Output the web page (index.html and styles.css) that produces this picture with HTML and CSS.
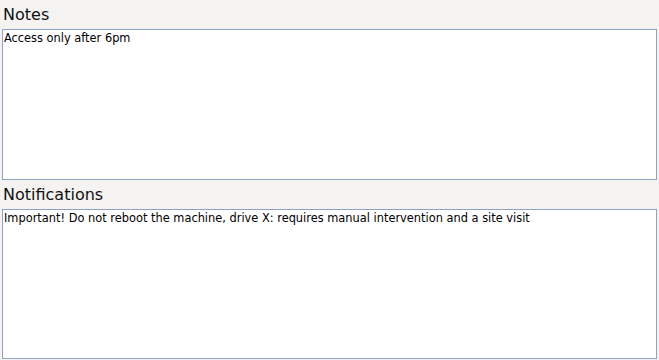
FILE: index.html
```html
<!DOCTYPE html>
<html lang="en">
<head>
  <meta charset="UTF-8" />
  <meta name="viewport" content="width=device-width, initial-scale=1.0"/>
  <title>Machine Notes</title>
  <link rel="stylesheet" href="styles.css">
</head>
<body>
  <div class="field">
    <label for="notes">Notes</label>
    <textarea id="notes" class="notes">Access only after 6pm</textarea>
  </div>
  <div class="field">
    <label for="notifications">Notifications</label>
    <textarea id="notifications" class="notifications">Important! Do not reboot the machine, drive X: requires manual intervention and a site visit</textarea>
  </div>
</body>
</html>
```

FILE: styles.css
```css
html, body {
  height: 100%;
}
body {
  font-family: 'DejaVu Sans', sans-serif;
  background: #f4f3f1;
  margin: 0;
  padding: 0 2px;
  box-sizing: border-box;
}
.field {
  display: flex;
  flex-direction: column;
}
label {
  font-size: 16px;
  line-height: 29px;
  height: 29px;
  padding-left: 1px;
  color: #111;
}
textarea {
  display: block;
  width: 100%;
  box-sizing: border-box;
  margin: 0;
  padding: 1px 1px;
  border: 1px solid #8fa2c6;
  background: #fff;
  font-family: 'DejaVu Sans', sans-serif;
  font-size: 11.4px;
  line-height: 15px;
  color: #000;
  resize: none;
  outline: none;
}
.notes {
  height: 151px;
}
.notifications {
  height: 150px;
}
```
